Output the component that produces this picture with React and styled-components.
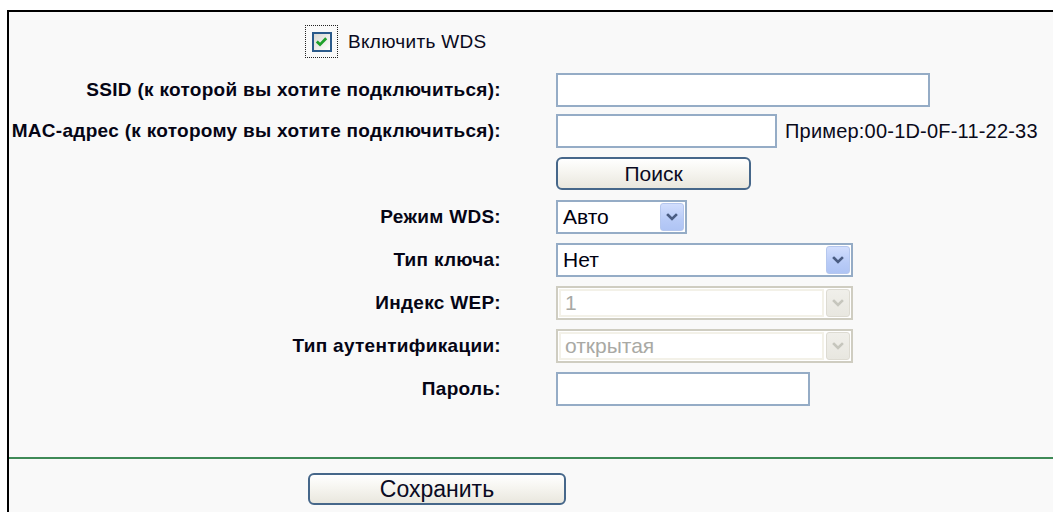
import React from "react";
import styled, { createGlobalStyle } from "styled-components";

const GlobalStyle = createGlobalStyle`
  html, body {
    margin: 0;
    padding: 0;
    background: #ffffff;
  }
  body {
    font-family: "Liberation Sans", Arial, sans-serif;
    color: #000;
  }
`;

const Page = styled.div`
  box-sizing: border-box;
  width: 1053px;
  height: 512px;
  padding: 10px 0 0 7px;
  overflow: hidden;
`;

const Panel = styled.div`
  box-sizing: border-box;
  height: 502px;
  border-top: 2px solid #000;
  border-left: 2px solid #000;
  background: #f9f9f9;
`;

const EnableRow = styled.div`
  display: flex;
  align-items: center;
  gap: 10px;
  padding: 13px 0 0 296px;
  height: 33px;
`;

const FocusBox = styled.div`
  box-sizing: border-box;
  width: 33px;
  height: 33px;
  border: 1px dotted #222;
  display: flex;
  align-items: center;
  justify-content: center;
`;

const CheckBox = styled.div`
  box-sizing: border-box;
  width: 20px;
  height: 20px;
  border: 2px solid #2a5a8a;
  background: linear-gradient(135deg, #d8d8d2 0%, #f2f2ee 65%, #ffffff 100%);
  display: flex;
  align-items: center;
  justify-content: center;
`;

const EnableText = styled.span`
  font-size: 19px;
  letter-spacing: 0.3px;
  color: #0a0a20;
`;

const Row = styled.div`
  display: grid;
  grid-template-columns: 492px 1fr;
  column-gap: 55px;
  align-items: center;
  height: ${(p) => p.$h || 34}px;
  margin-top: ${(p) => p.$top || 0}px;
`;

const Label = styled.div`
  justify-self: end;
  white-space: nowrap;
  font-size: 19px;
  letter-spacing: 0.3px;
  font-weight: bold;
  color: #050515;
`;

const Field = styled.div`
  display: flex;
  align-items: center;
  gap: 8px;
  height: 100%;
`;

const TextBox = styled.div`
  box-sizing: border-box;
  width: ${(p) => p.$w}px;
  height: 34px;
  border: 2px solid #95acc6;
  background: #ffffff;
`;

const Hint = styled.span`
  font-size: 20px;
  letter-spacing: 0.2px;
  color: #0a0a1a;
  white-space: nowrap;
`;

const SelectBox = styled.div`
  box-sizing: border-box;
  width: ${(p) => p.$w}px;
  height: 34px;
  border: 2px solid ${(p) => (p.$off ? "#cfcdc1" : "#95acc6")};
  background: #ffffff;
  display: flex;
  align-items: center;
  padding: 1px 1px 1px ${(p) => (p.$off ? 1 : 5)}px;
`;

const SelectValue = styled.div`
  flex: 1;
  height: 100%;
  display: flex;
  align-items: center;
  font-size: 21px;
  color: ${(p) => (p.$off ? "#a9a9a4" : "#000010")};
  box-sizing: border-box;
  padding-left: ${(p) => (p.$off ? 4 : 0)}px;
  border: ${(p) => (p.$off ? "2px solid #f3f1e8" : "none")};
`;

const ArrowButton = styled.div`
  box-sizing: border-box;
  width: 24px;
  height: 100%;
  margin-left: 2px;
  border-radius: 3px;
  border: 1px solid ${(p) => (p.$off ? "#dddbd2" : "#b5c7ee")};
  background: ${(p) =>
    p.$off
      ? "linear-gradient(#f0efea, #e8e7e0)"
      : "linear-gradient(#d2defd, #b8cbf7 60%, #afc4f4)"};
  display: flex;
  align-items: center;
  justify-content: center;
`;

const PushButton = styled.button`
  box-sizing: border-box;
  width: ${(p) => p.$w}px;
  height: ${(p) => p.$h}px;
  border: 2px solid #46678a;
  border-radius: 6px;
  background: linear-gradient(#ffffff 0%, #f6f5f0 45%, #e9e7de 100%);
  font-family: "Liberation Sans", Arial, sans-serif;
  font-size: ${(p) => p.$fs}px;
  color: #0a0a22;
  padding: 0;
  cursor: pointer;
`;

const Divider = styled.div`
  height: 2px;
  margin-top: 51px;
  background: #3f8a57;
`;

const Footer = styled.div`
  padding: 14px 0 0 299px;
`;

function Chevron({ off }) {
  return (
    <svg width="12" height="9" viewBox="0 0 12 9">
      <path
        d="M2 2 L6 6 L10 2"
        fill="none"
        stroke={off ? "#c6c6bd" : "#4a5c82"}
        strokeWidth="2.6"
        strokeLinecap="square"
      />
    </svg>
  );
}

function Select({ width, value, off }) {
  return (
    <SelectBox $w={width} $off={off}>
      <SelectValue $off={off}>{value}</SelectValue>
      <ArrowButton $off={off}>
        <Chevron off={off} />
      </ArrowButton>
    </SelectBox>
  );
}

export default function App() {
  return (
    <>
      <GlobalStyle />
      <Page>
        <Panel>
          <EnableRow>
            <FocusBox>
              <CheckBox>
                <svg width="13" height="11" viewBox="0 0 13 11">
                  <path
                    d="M1.8 5.5 L5 8.6 L11.2 2.2"
                    fill="none"
                    stroke="#1fa12a"
                    strokeWidth="2.8"
                  />
                </svg>
              </CheckBox>
            </FocusBox>
            <EnableText>Включить WDS</EnableText>
          </EnableRow>

          <Row $top={15}>
            <Label>SSID (к которой вы хотите подключиться):</Label>
            <Field>
              <TextBox $w={374} />
            </Field>
          </Row>

          <Row $top={7}>
            <Label>MAC-адрес (к которому вы хотите подключиться):</Label>
            <Field>
              <TextBox $w={221} />
              <Hint>Пример:00-1D-0F-11-22-33</Hint>
            </Field>
          </Row>

          <Row $top={9} $h={33}>
            <span />
            <Field>
              <PushButton $w={195} $h={33} $fs={21}>
                Поиск
              </PushButton>
            </Field>
          </Row>

          <Row $top={10}>
            <Label>Режим WDS:</Label>
            <Field>
              <Select width={131} value="Авто" />
            </Field>
          </Row>

          <Row $top={9}>
            <Label>Тип ключа:</Label>
            <Field>
              <Select width={297} value="Нет" />
            </Field>
          </Row>

          <Row $top={9}>
            <Label>Индекс WEP:</Label>
            <Field>
              <Select width={297} value="1" off />
            </Field>
          </Row>

          <Row $top={9}>
            <Label>Тип аутентификации:</Label>
            <Field>
              <Select width={297} value="открытая" off />
            </Field>
          </Row>

          <Row $top={9}>
            <Label>Пароль:</Label>
            <Field>
              <TextBox $w={254} />
            </Field>
          </Row>

          <Divider />

          <Footer>
            <PushButton $w={258} $h={32} $fs={23}>
              Сохранить
            </PushButton>
          </Footer>
        </Panel>
      </Page>
    </>
  );
}
